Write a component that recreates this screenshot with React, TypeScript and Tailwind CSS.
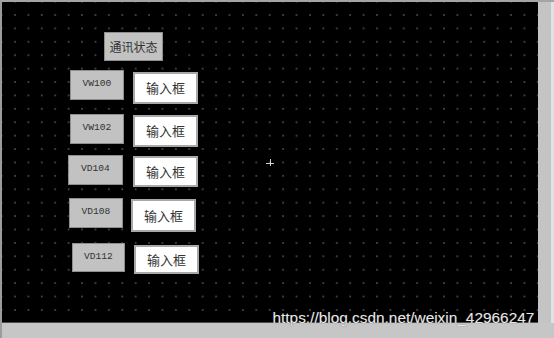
const labels = [
  { text: "VW100", left: 68, top: 68, w: 54, h: 30 },
  { text: "VW102", left: 68, top: 112, w: 54, h: 30 },
  { text: "VD104", left: 66, top: 153, w: 55, h: 30 },
  { text: "VD108", left: 67, top: 196, w: 54, h: 30 },
  { text: "VD112", left: 70, top: 241, w: 53, h: 29 },
]

const inputs = [
  { left: 131, top: 70, h: 32 },
  { left: 131, top: 113, h: 32 },
  { left: 131, top: 154, h: 31 },
  { left: 129, top: 197, h: 33 },
  { left: 132, top: 243, h: 29 },
]

export default function App() {
  return (
    <div className="relative w-[554px] h-[338px] overflow-hidden bg-[#c6c6c6] border-t-2 border-l-2 border-t-[#a4a4a4] border-l-[#9c9c9c]">
      <div className="flex h-[321px]">
        {/* canvas */}
        <div className="relative w-[536px] h-[321px] bg-black bg-[radial-gradient(circle,#7a7a7a_0_0.5px,transparent_0.85px)] bg-[length:13.42px_13.42px] bg-[position:6.3px_6.3px] border-b border-[#4a4a4a]">
          <div
            className="absolute left-[102px] top-[30px] w-[59px] h-[29px] flex items-center justify-center bg-[#c2c2c2] border border-[#8e8e8e] text-[12px] text-[#333]"
            style={{ fontFamily: '"Noto Sans CJK SC", sans-serif' }}
          >
            通讯状态
          </div>

          {labels.map((l) => (
            <div
              key={l.text}
              className="absolute flex items-center justify-center bg-[#c2c2c2] border border-[#8e8e8e] text-[9.6px] text-[#333] pb-px"
              style={{ left: l.left, top: l.top, width: l.w, height: l.h, fontFamily: '"Liberation Mono", monospace' }}
            >
              {l.text}
            </div>
          ))}

          {inputs.map((b, i) => (
            <div
              key={i}
              className="absolute w-[65px] flex items-center justify-center bg-white border-2 border-[#a8a8a8] text-[13px] text-[#333]"
              style={{ left: b.left, top: b.top, height: b.h, fontFamily: '"Noto Sans CJK SC", sans-serif' }}
            >
              输入框
            </div>
          ))}

          {/* cursor cross */}
          <div className="absolute left-[264px] top-[160.5px] w-[8px] h-px bg-[#d0d0d0]" />
          <div className="absolute left-[267.5px] top-[157px] w-px h-[7px] bg-[#d0d0d0]" />
        </div>
        <div className="w-[13px] bg-[#c4c4c4]" />
        <div className="flex-1 bg-[#e2e2e2]" />
      </div>

      <div
        className="absolute left-[270.5px] top-[308px] leading-none text-[15.4px] text-[#e6e6e6] whitespace-nowrap [text-shadow:0_0_1px_#3a3a3a]"
        style={{ fontFamily: '"Liberation Sans", Arial, sans-serif' }}
      >
        https://blog.csdn.net/weixin_42966247
      </div>
    </div>
  )
}
